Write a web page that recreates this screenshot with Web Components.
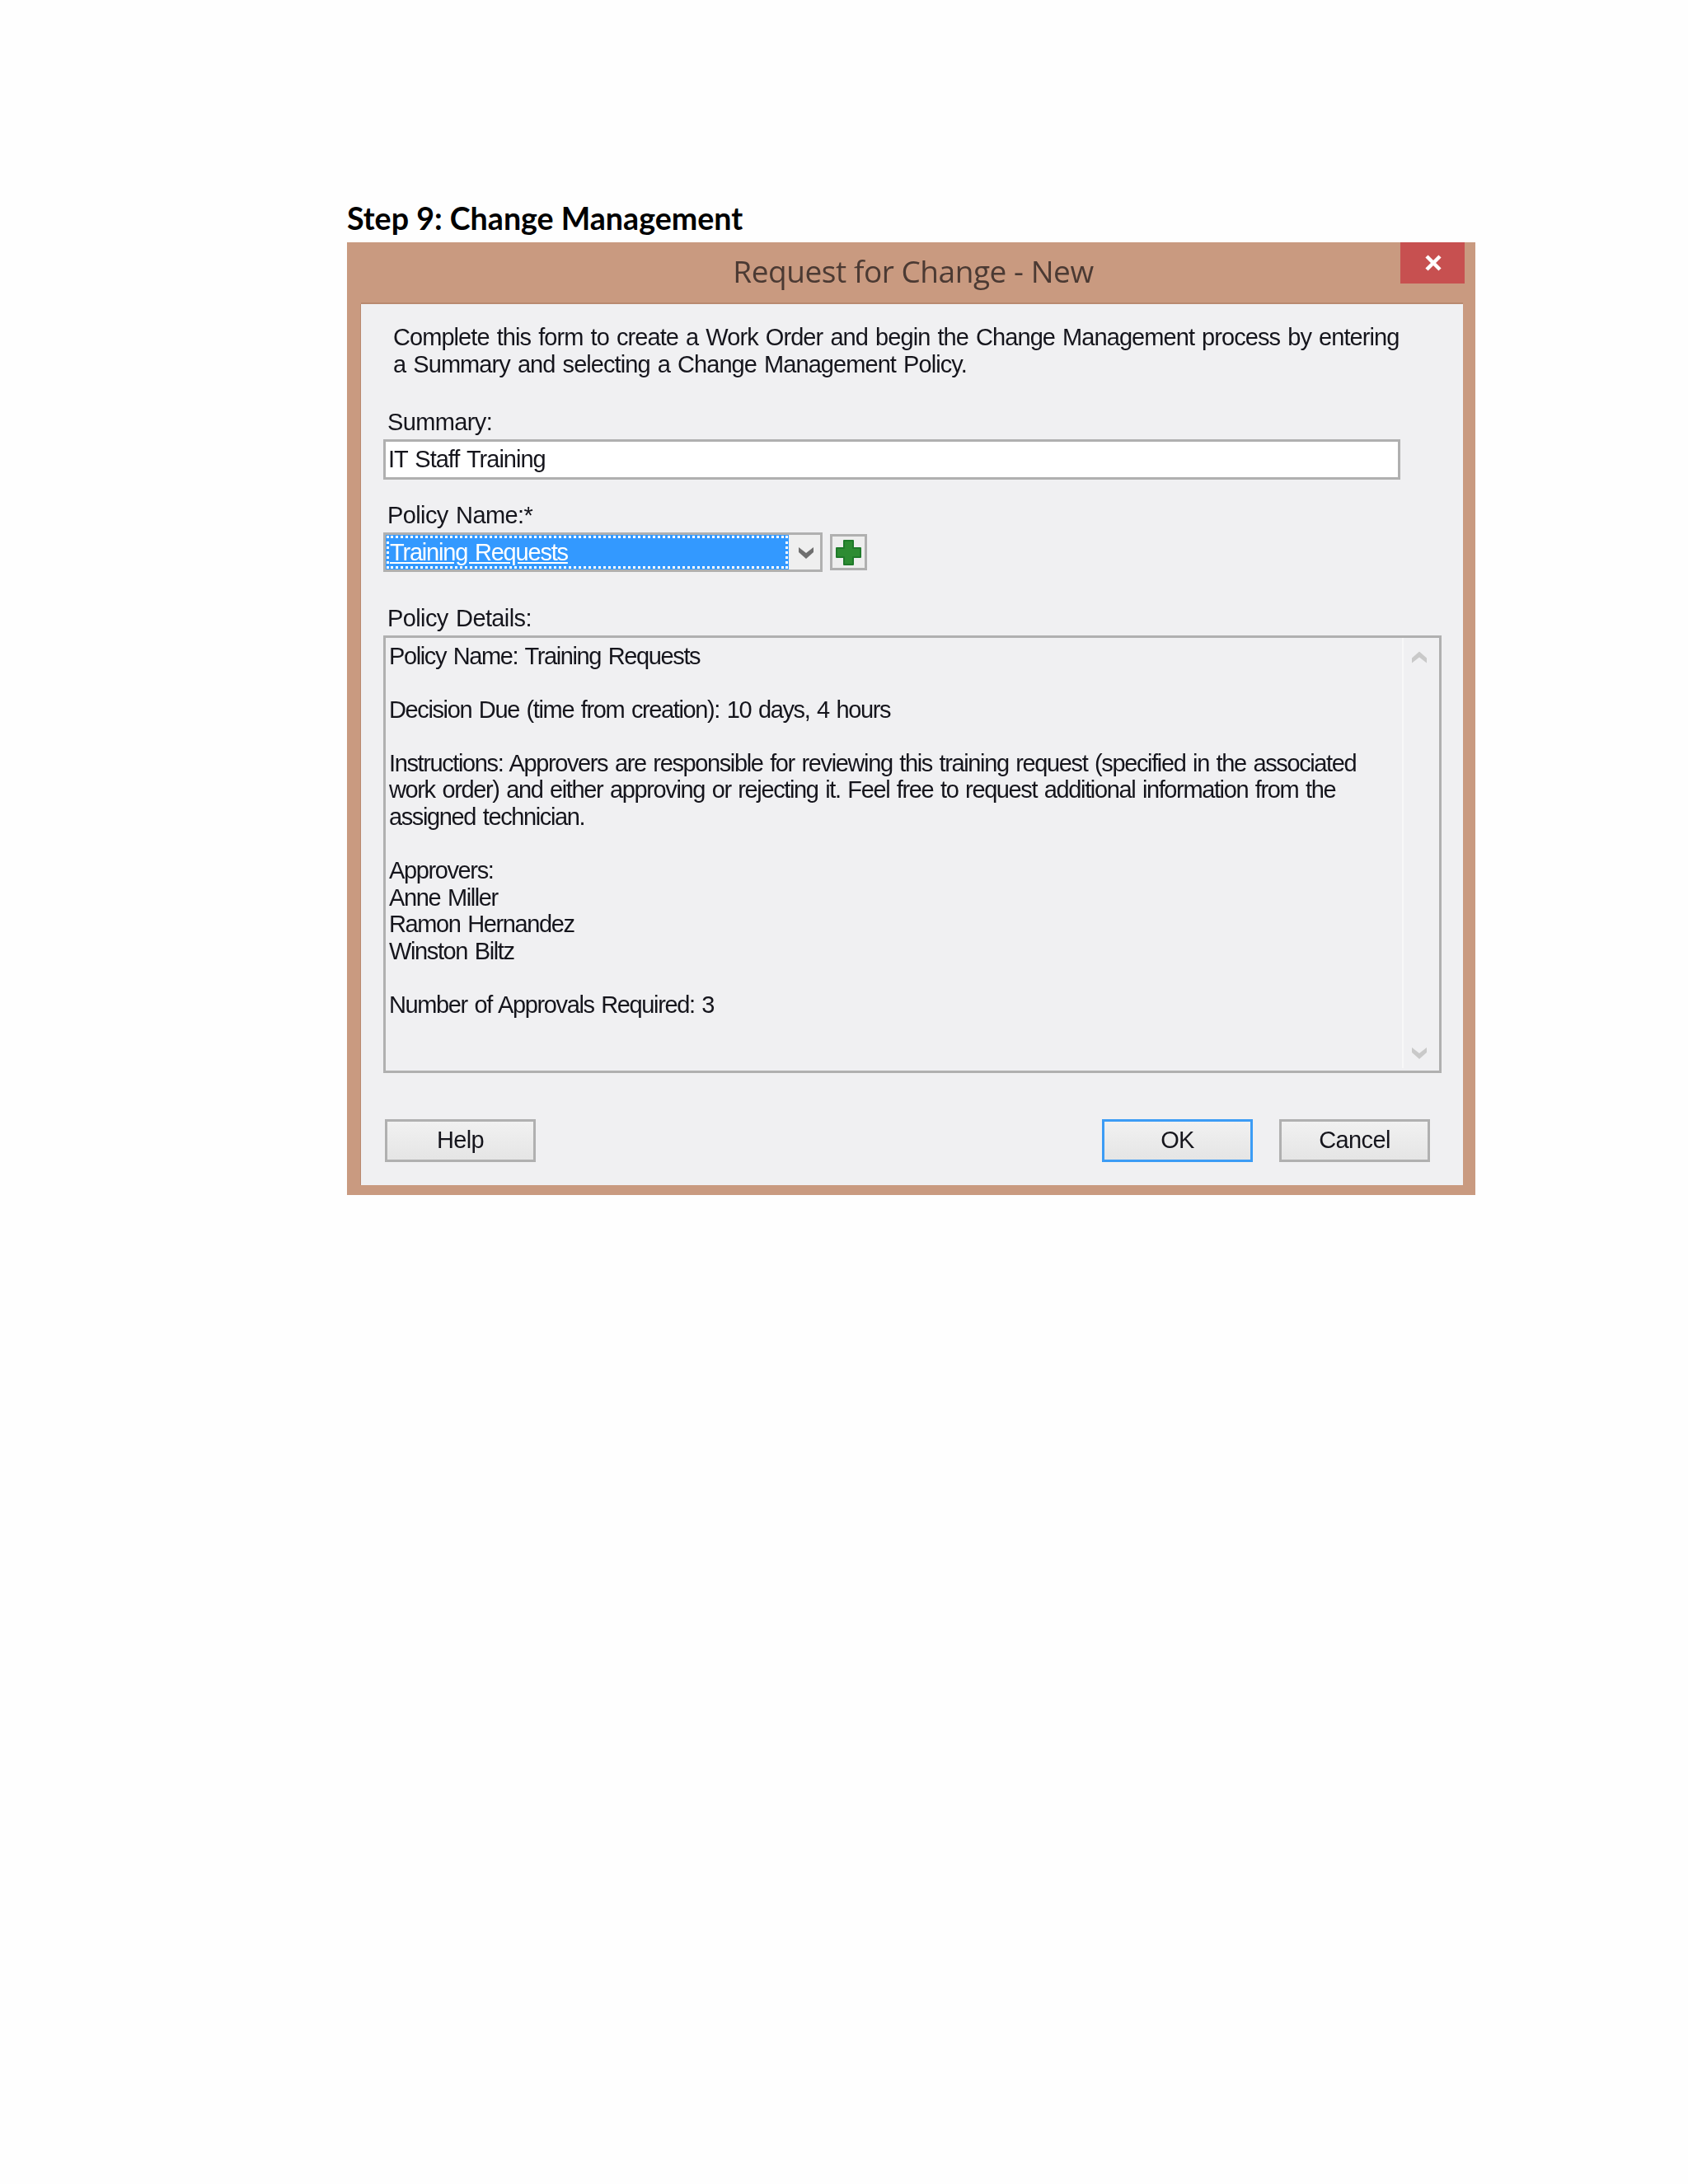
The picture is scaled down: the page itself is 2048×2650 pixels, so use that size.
<!DOCTYPE html>
<html>
<head>
<meta charset="utf-8">
<title>Step 9: Change Management</title>
<style>
  html, body { margin: 0; background: #fefefe; }
  body { height: 2650px; overflow: hidden; padding: 244px 0 0 421px; box-sizing: border-box; font-family: "Liberation Sans", Arial, sans-serif; }
</style>
</head>
<body>
<step-heading>Step 9: Change Management</step-heading>
<rfc-dialog heading="Request for Change - New">
  <intro-text>Complete this form to create a Work Order and begin the Change Management process by entering<br>a Summary and selecting a Change Management Policy.</intro-text>
  <form-field label="Summary:" gap="27" tight><text-input>IT Staff Training</text-input></form-field>
  <form-field label="Policy Name:*" gap="40">
    <policy-picker>Training Requests</policy-picker>
  </form-field>
  <form-field label="Policy Details:" gap="56" tight>
    <details-box>Policy Name: Training Requests

Decision Due (time from creation): 10 days, 4 hours

Instructions: Approvers are responsible for reviewing this training request (specified in the associated
work order) and either approving or rejecting it. Feel free to request additional information from the
assigned technician.

Approvers:
Anne Miller
Ramon Hernandez
Winston Biltz

Number of Approvals Required: 3</details-box>
  </form-field>
  <button-row>
    <win-button>Help</win-button>
    <win-button slot="right" focused>OK</win-button>
    <win-button slot="right">Cancel</win-button>
  </button-row>
</rfc-dialog>

<script>
const TEXT = `font: 29px/32.5px "Liberation Sans", Arial, sans-serif; letter-spacing: -0.62px; word-spacing: 2px; color: #15151c;`;
const chevron = (color) => `<svg width="18" height="15" viewBox="0 0 18 15"><path d="M0 1 L9 8 L18 1 V7 L9 15 L0 7Z" fill="${color}"/></svg>`;

class StepHeading extends HTMLElement {
  constructor() {
    super();
    this.attachShadow({ mode: "open" });
    this.shadowRoot.innerHTML = `
    <style>
      :host { display: block; margin-bottom: 8px; font: 700 37.6px/42px Lato, "Open Sans", sans-serif; color: #000; }
    </style>
    <slot></slot>`;
  }
}
customElements.define("step-heading", StepHeading);

class RfcDialog extends HTMLElement {
  constructor() {
    super();
    this.attachShadow({ mode: "open" });
    this.shadowRoot.innerHTML = `
    <style>
      :host { display: block; width: 1369px; background: #c99a80; padding-bottom: 12px; filter: blur(0.4px); }
      .bar { display: grid; grid-template-columns: 1fr auto 1fr; height: 75px; }
      h1 { grid-column: 2; margin: 0; padding-left: 5px; font: 400 37px/70px "Open Sans", sans-serif; color: #4b3a33; letter-spacing: -0.45px; }
      .close { grid-column: 3; justify-self: end; box-sizing: border-box; width: 78px; height: 50px; margin-right: 13px; padding-left: 2px; background: #c75050; display: flex; align-items: center; justify-content: center; }
      .panel { display: flex; flex-direction: column; box-sizing: border-box; width: 1337px; height: 1069px; margin-left: 17px; padding: 24px 40px 28px 27px; background: #f0f0f2; box-shadow: 0 -2px 0 #b98a70, -1px 0 0 #b98a70; }
    </style>
    <div class="bar">
      <h1></h1>
      <div class="close"><svg width="22" height="20" viewBox="0 0 22 20"><path d="M3 2 L19 18 M19 2 L3 18" stroke="#fff" stroke-width="4.5" fill="none"/></svg></div>
    </div>
    <div class="panel"><slot></slot></div>`;
    this.shadowRoot.querySelector("h1").textContent = this.getAttribute("heading");
  }
}
customElements.define("rfc-dialog", RfcDialog);

class IntroText extends HTMLElement {
  constructor() {
    super();
    this.attachShadow({ mode: "open" });
    this.shadowRoot.innerHTML = `
    <style>
      :host { display: block; margin: 0 0 38px 12px; white-space: nowrap; ${TEXT} letter-spacing: -0.94px; }
    </style>
    <slot></slot>`;
  }
}
customElements.define("intro-text", IntroText);

class FormField extends HTMLElement {
  constructor() {
    super();
    this.attachShadow({ mode: "open" });
    this.shadowRoot.innerHTML = `
    <style>
      :host { display: block; ${TEXT} }
      label { display: block; margin: 0 0 5px 5px; }
      :host([tight]) label { margin-bottom: 4px; }
    </style>
    <label></label>
    <slot></slot>`;
    this.shadowRoot.querySelector("label").textContent = this.getAttribute("label");
    this.style.marginBottom = this.getAttribute("gap") + "px";
  }
}
customElements.define("form-field", FormField);

class TextInput extends HTMLElement {
  constructor() {
    super();
    this.attachShadow({ mode: "open" });
    this.shadowRoot.innerHTML = `
    <style>
      :host { display: block; box-sizing: border-box; width: 1234px; height: 49px; padding-left: 3px; border: 3px solid #b0b0b0; background: #fff; line-height: 42px; letter-spacing: -1px; }
    </style>
    <slot></slot>`;
  }
}
customElements.define("text-input", TextInput);

class PolicyPicker extends HTMLElement {
  constructor() {
    super();
    this.attachShadow({ mode: "open" });
    this.shadowRoot.innerHTML = `
    <style>
      :host { display: flex; align-items: center; gap: 9px; }
      .combo { display: flex; box-sizing: border-box; width: 533px; height: 48px; border: 3px solid #b0b0b0; }
      .value { flex: 1; background: #3399ff; padding: 1px; }
      .value div { box-sizing: border-box; height: 40px; border: 3px dotted #fff; padding-left: 1px; color: #fff; line-height: 35px; letter-spacing: -1.2px; text-decoration: underline; }
      .arrow { display: flex; align-items: center; justify-content: center; box-sizing: border-box; width: 38px; padding-left: 3px; background: #efefef; }
      .add { display: flex; align-items: center; justify-content: center; box-sizing: border-box; width: 45px; height: 44px; border: 3px solid #b0b0b0; background: #eeeeee; }
    </style>
    <div class="combo">
      <div class="value"><div><slot></slot></div></div>
      <div class="arrow">${chevron("#6f6f6f")}</div>
    </div>
    <div class="add">
      <svg width="31" height="31" viewBox="0 0 31 31"><path d="M10 1 H21 V10 H30 V21 H21 V30 H10 V21 H1 V10 H10Z" fill="#2d8c32" stroke="#1f7a2a" stroke-width="2" stroke-linejoin="round"/></svg>
    </div>`;
  }
}
customElements.define("policy-picker", PolicyPicker);

class DetailsBox extends HTMLElement {
  constructor() {
    super();
    this.attachShadow({ mode: "open" });
    this.shadowRoot.innerHTML = `
    <style>
      :host { display: flex; box-sizing: border-box; width: 1284px; height: 531px; border: 3px solid #b0b0b0; background: #f0f0f2; }
      .text { flex: 1; padding: 6px 0 0 4px; white-space: pre; overflow: hidden; letter-spacing: -1.38px; line-height: 32.6px; }
      .scroll { display: flex; flex-direction: column; justify-content: space-between; align-items: center; box-sizing: border-box; width: 45px; margin-bottom: 3px; padding: 10px 6px 4px 0; border-left: 2px solid #f8f8f8; }
      .up { transform: scaleY(-1); }
    </style>
    <div class="text"><slot></slot></div>
    <div class="scroll">
      <span class="up">${chevron("#c9c9c9")}</span>
      <span>${chevron("#c9c9c9")}</span>
    </div>`;
  }
}
customElements.define("details-box", DetailsBox);

class ButtonRow extends HTMLElement {
  constructor() {
    super();
    this.attachShadow({ mode: "open" });
    this.shadowRoot.innerHTML = `
    <style>
      :host { display: flex; justify-content: space-between; margin-left: 2px; }
      div { display: flex; gap: 32px; }
    </style>
    <slot></slot>
    <div><slot name="right"></slot></div>`;
  }
}
customElements.define("button-row", ButtonRow);

class WinButton extends HTMLElement {
  constructor() {
    super();
    this.attachShadow({ mode: "open" });
    this.shadowRoot.innerHTML = `
    <style>
      :host { display: block; box-sizing: border-box; width: 183px; height: 52px; border: 3px solid #b0b0b0; background: linear-gradient(#f1f1f1, #e5e5e5); text-align: center; ${TEXT} line-height: 44px; }
      :host([focused]) { border-color: #3c9cf5; }
    </style>
    <slot></slot>`;
  }
}
customElements.define("win-button", WinButton);
</script>
</body>
</html>
